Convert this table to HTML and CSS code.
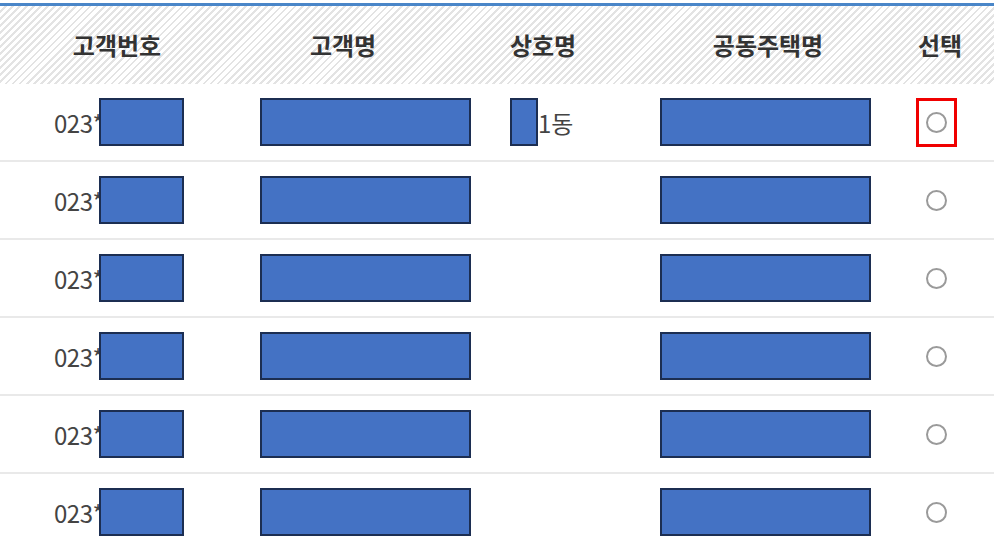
FILE: index.html
```html
<!DOCTYPE html>
<html lang="ko">
<head>
<meta charset="utf-8">
<link rel="stylesheet" href="styles.css">
</head>
<body>
<div class="table">
  <div class="row head">
    <div class="cell c1">고객번호</div>
    <div class="cell c2">고객명</div>
    <div class="cell c3">상호명</div>
    <div class="cell c4">공동주택명</div>
    <div class="cell c5">선택</div>
    <div class="cell c6"></div>
  </div>
  <div class="row body">
    <div class="cell c1"><span class="num">023*</span><span class="mask m1"></span></div>
    <div class="cell c2"><span class="mask m2"></span></div>
    <div class="cell c3"><span class="mask m3"></span><span class="txt">1동</span></div>
    <div class="cell c4"><span class="mask m2"></span></div>
    <div class="cell c5"><span class="hl"><span class="radio"></span></span></div>
    <div class="cell c6"></div>
  </div>
  <div class="row body">
    <div class="cell c1"><span class="num">023*</span><span class="mask m1"></span></div>
    <div class="cell c2"><span class="mask m2"></span></div>
    <div class="cell c3"></div>
    <div class="cell c4"><span class="mask m2"></span></div>
    <div class="cell c5"><span class="radio"></span></div>
    <div class="cell c6"></div>
  </div>
  <div class="row body">
    <div class="cell c1"><span class="num">023*</span><span class="mask m1"></span></div>
    <div class="cell c2"><span class="mask m2"></span></div>
    <div class="cell c3"></div>
    <div class="cell c4"><span class="mask m2"></span></div>
    <div class="cell c5"><span class="radio"></span></div>
    <div class="cell c6"></div>
  </div>
  <div class="row body">
    <div class="cell c1"><span class="num">023*</span><span class="mask m1"></span></div>
    <div class="cell c2"><span class="mask m2"></span></div>
    <div class="cell c3"></div>
    <div class="cell c4"><span class="mask m2"></span></div>
    <div class="cell c5"><span class="radio"></span></div>
    <div class="cell c6"></div>
  </div>
  <div class="row body">
    <div class="cell c1"><span class="num">023*</span><span class="mask m1"></span></div>
    <div class="cell c2"><span class="mask m2"></span></div>
    <div class="cell c3"></div>
    <div class="cell c4"><span class="mask m2"></span></div>
    <div class="cell c5"><span class="radio"></span></div>
    <div class="cell c6"></div>
  </div>
  <div class="row body">
    <div class="cell c1"><span class="num">023*</span><span class="mask m1"></span></div>
    <div class="cell c2"><span class="mask m2"></span></div>
    <div class="cell c3"></div>
    <div class="cell c4"><span class="mask m2"></span></div>
    <div class="cell c5"><span class="radio"></span></div>
    <div class="cell c6"></div>
  </div>
</div>
</body>
</html>
```

FILE: styles.css
```css
html, body {
  margin: 0;
  padding: 0;
  background: #fff;
}
body {
  font-family: "Noto Sans CJK KR", "Noto Sans", sans-serif;
  color: #444;
  overflow: hidden;
}
.table {
  margin-top: 3px;
  border-top: 3px solid #4a86c8;
  width: 994px;
}
.row {
  display: grid;
  grid-template-columns: 234px 218px 182px 268px 68px 1fr;
}
.head {
  height: 78px;
  background: repeating-linear-gradient(135deg, #ffffff 0px, #ffffff 3px, #e3e3e3 3px, #e3e3e3 5px);
}
.head .cell {
  display: flex;
  align-items: center;
  justify-content: center;
  font-size: 24px;
  font-weight: bold;
  color: #333;
  padding-bottom: 2px;
  white-space: nowrap;
}
.head .c5 {
  padding-left: 8px;
}
.body {
  height: 76px;
  border-bottom: 2px solid #e9e9e9;
}
.body .cell {
  display: flex;
  align-items: center;
  white-space: nowrap;
}
.body .c1 { padding-left: 54px; }
.body .c2 { padding-left: 26px; }
.body .c3 { padding-left: 58px; }
.body .c4 { padding-left: 26px; }
.body .c5 { justify-content: center; }
.num {
  font-size: 24px;
  color: #444;
  letter-spacing: -0.5px;
}
.txt {
  font-size: 24px;
  color: #444;
}
.mask {
  display: inline-block;
  flex-shrink: 0;
  box-sizing: border-box;
  height: 48px;
  background: #4472c4;
  border: 2px solid #1c2e52;
}
.m1 {
  width: 85px;
  margin-left: -4px;
}
.m2 { width: 211px; }
.m3 { width: 28px; }
.hl {
  box-sizing: border-box;
  width: 41px;
  height: 49px;
  border: 3px solid #f00000;
  display: flex;
  align-items: center;
  justify-content: center;
}
.radio {
  display: inline-block;
  box-sizing: border-box;
  width: 21px;
  height: 21px;
  border: 2px solid #9a9a9a;
  border-radius: 50%;
}
```
